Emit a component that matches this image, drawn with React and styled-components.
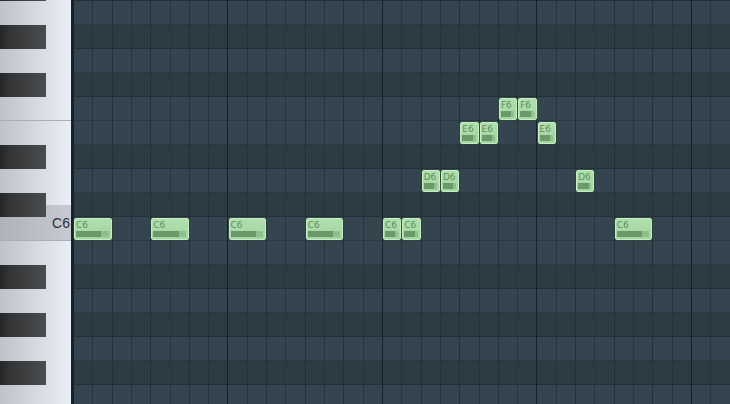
import React from "react";
import styled, { createGlobalStyle, css } from "styled-components";

const STEP = 154.5 / 8;

const GlobalStyle = createGlobalStyle`
  html, body {
    margin: 0;
    padding: 0;
    background: #2d3b45;
    overflow: hidden;
  }
`;

// top to bottom, first row starts 23px above the window
const KEYS = [
  { name: "A#6", black: true },
  { name: "A6" },
  { name: "G#6", black: true },
  { name: "G6" },
  { name: "F#6", black: true },
  { name: "F6", split: true },
  { name: "E6" },
  { name: "D#6", black: true },
  { name: "D6" },
  { name: "C#6", black: true, hlLow: true },
  { name: "C6", split: true, hl: true, label: "C6" },
  { name: "B5" },
  { name: "A#5", black: true },
  { name: "A5" },
  { name: "G#5", black: true },
  { name: "G5" },
  { name: "F#5", black: true },
  { name: "F5" },
];

const NOTES = {
  C6: [
    [0, 2],
    [4, 2],
    [8, 2],
    [12, 2],
    [16, 1],
    [17, 1],
    [28, 2],
  ],
  D6: [
    [18, 1],
    [19, 1],
    [26, 1],
  ],
  E6: [
    [20, 1],
    [21, 1],
    [24, 1],
  ],
  F6: [
    [22, 1],
    [23, 1],
  ],
};

const App = () => {
  return (
    <>
      <GlobalStyle />
      <Roll>
        <Keyboard>
          {KEYS.map((k) => (
            <Key key={k.name} split={k.split} hl={k.hl} hlLow={k.hlLow}>
              {k.black && <BlackKey />}
              {k.label && <KeyLabel>{k.label}</KeyLabel>}
            </Key>
          ))}
        </Keyboard>
        <Grid>
          {KEYS.map((k) => (
            <Lane key={k.name} black={k.black}>
              {(NOTES[k.name] || []).map(([pos, len]) => (
                <Note
                  key={pos}
                  style={{ left: pos * STEP + 1, width: len * STEP - 1 }}
                >
                  <NoteName>{k.name}</NoteName>
                  <VelTrack>
                    <VelFill />
                  </VelTrack>
                </Note>
              ))}
            </Lane>
          ))}
        </Grid>
      </Roll>
    </>
  );
};

const Roll = styled.div`
  display: flex;
  width: 730px;
  height: 404px;
  overflow: hidden;
`;

const Keyboard = styled.div`
  width: 71px;
  flex-shrink: 0;
  margin-top: -23px;
  display: flex;
  flex-direction: column;
  border-right: 2px solid #16232b;
  background: linear-gradient(to right, #bec2ca, #d9dde5 60%, #eaeef6);
`;

const Key = styled.div`
  position: relative;
  height: 24px;
  flex-shrink: 0;
  display: flex;
  align-items: stretch;
  box-shadow: ${(p) => (p.split ? "inset 0 -1px 0 #a9adb4" : "none")};
  ${(p) =>
    p.hl &&
    css`
      background: linear-gradient(to right, #aeb2ba, #bcc0c8 60%, #c6cad2);
    `}
  ${(p) =>
    p.hlLow &&
    css`
      background: linear-gradient(to right, #aeb2ba, #bcc0c8 60%, #c6cad2) 0
        12px / 100% 12px no-repeat;
    `}
`;

const BlackKey = styled.div`
  width: 46px;
  background: linear-gradient(to right, #232526, #333435 20%, #4b4c4d);
`;

const KeyLabel = styled.span`
  margin-left: auto;
  margin-top: -12px;
  padding-right: 1px;
  align-self: center;
  font-family: "Liberation Sans", Arial, sans-serif;
  font-size: 14px;
  color: #2c2f33;
`;

const lines = css`
  repeating-linear-gradient(to right, #14212a 0 1px, transparent 1px 154.5px),
  repeating-linear-gradient(to right, #243039 0 1px, transparent 1px 38.625px),
  repeating-linear-gradient(to right, #27353e 0 1px, transparent 1px 19.3125px)
`;

const Grid = styled.div`
  flex: 1;
  margin-top: -23px;
  display: flex;
  flex-direction: column;
`;

const Lane = styled.div`
  position: relative;
  height: 24px;
  flex-shrink: 0;
  box-shadow: inset 0 -1px 0 rgba(20, 32, 40, 0.35);
  background: ${lines}, ${(p) => (p.black ? "#2d3b45" : "#35454f")};
`;

const Note = styled.div`
  position: absolute;
  top: 1px;
  bottom: 1px;
  box-sizing: border-box;
  border: 1px solid #c6ecc4;
  border-radius: 2px;
  box-shadow: 0 0 0 1px rgba(60, 90, 60, 0.35);
  background: linear-gradient(to bottom, #b0dfae, #a2d5a0);
  display: flex;
  flex-direction: column;
  justify-content: space-between;
  padding: 1px 2px 2px 1px;
`;

const NoteName = styled.span`
  font-family: "DejaVu Sans", sans-serif;
  font-size: 9px;
  line-height: 11px;
  color: #5d8e5c;
`;

const VelTrack = styled.div`
  height: 6px;
  background: #8fbf8d;
`;

const VelFill = styled.div`
  width: 78%;
  height: 100%;
  background: #6a9a69;
`;

export default App;
